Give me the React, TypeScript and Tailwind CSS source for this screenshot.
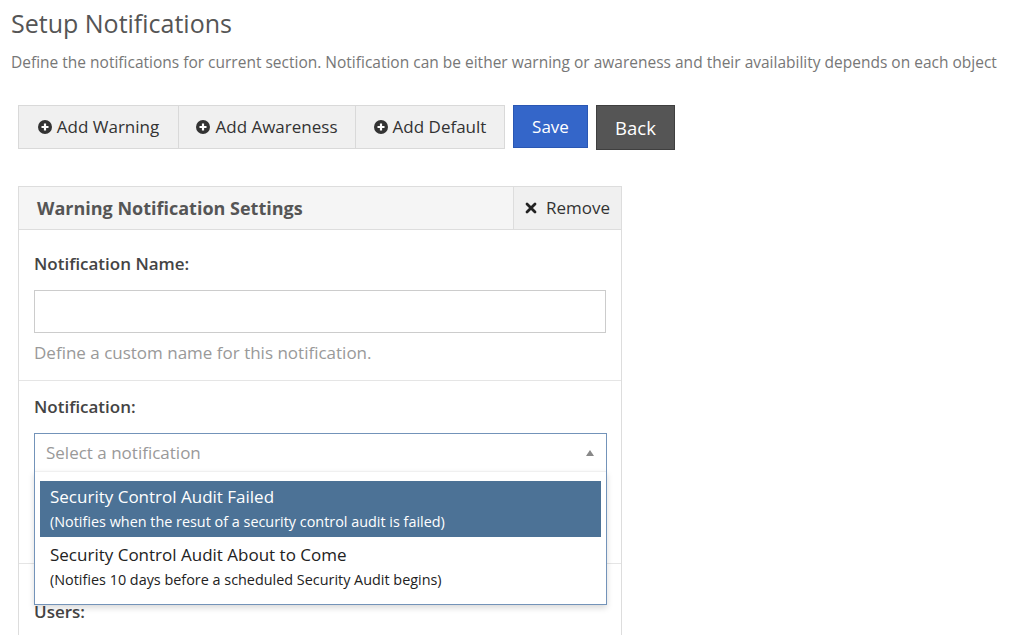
import React from 'react';

function PlusCircle() {
    return (
        <svg width="14" height="14" viewBox="0 0 14 14" className="shrink-0">
            <circle cx="7" cy="7" r="7" fill="#333" />
            <path d="M7 3.5v7M3.5 7h7" stroke="#fff" strokeWidth="2.2" />
        </svg>
    );
}

function TimesIcon() {
    return (
        <svg width="12" height="12" viewBox="0 0 12 12" className="shrink-0">
            <path d="M2 2l8 8M10 2l-8 8" stroke="#222" strokeWidth="2.8" strokeLinecap="round" />
        </svg>
    );
}

export default function App() {
    const addButtons = [
        { label: 'Add Warning', width: 'w-[159px]' },
        { label: 'Add Awareness', width: 'w-[177px]' },
        { label: 'Add Default', width: 'w-[149px]' },
    ];

    const options = [
        {
            title: 'Security Control Audit Failed',
            desc: '(Notifies when the resut of a security control audit is failed)',
            active: true,
        },
        {
            title: 'Security Control Audit About to Come',
            desc: '(Notifies 10 days before a scheduled Security Audit begins)',
            active: false,
        },
    ];

    return (
        <div className="w-full h-[635px] overflow-hidden bg-white font-['Open_Sans',sans-serif]">
            {/* Page header */}
            <h1 className="pl-[11px] pt-[8px] text-[25px] leading-[30px] text-[#555] font-normal">
                Setup Notifications
            </h1>
            <p className="pl-[11px] mt-[14px] text-[15.5px] leading-[20px] text-[#777] whitespace-nowrap">
                Define the notifications for current section. Notification can be either warning or awareness and their availability depends on each object
            </p>

            {/* Toolbar */}
            <div className="flex items-start ml-[18px] mt-[33px]">
                <div className="flex h-[44px] border border-[#d9d9d9] bg-[#f0f0f0]">
                    {addButtons.map((b, i) => (
                        <button
                            key={b.label}
                            className={`${b.width} flex items-center justify-center gap-[5px] text-[17px] text-[#333] ${i > 0 ? 'border-l border-[#d9d9d9]' : ''}`}
                        >
                            <PlusCircle />
                            <span>{b.label}</span>
                        </button>
                    ))}
                </div>
                <button className="ml-[8px] w-[75px] h-[43px] bg-[#3466c9] border border-[#2a57b3] text-white text-[17px]">
                    Save
                </button>
                <button className="ml-[8px] w-[79px] h-[45px] bg-[#555] border border-[#3f3f3f] text-white text-[18.5px]">
                    Back
                </button>
            </div>

            {/* Settings panel */}
            <div className="ml-[18px] mt-[36px] w-[604px] border border-[#ddd]">
                <div className="flex h-[43px] bg-[#f5f5f5] border-b border-[#ddd]">
                    <div className="flex-1 flex items-center pl-[18px] text-[18px] font-bold text-[#555]">
                        Warning Notification Settings
                    </div>
                    <div className="w-[108px] flex items-center justify-center gap-[9px] border-l border-[#ddd] bg-[#f0f0f0] text-[17px] text-[#333]">
                        <TimesIcon />
                        <span>Remove</span>
                    </div>
                </div>

                <div className="px-[15px] pt-[22px] pb-[15px] border-b border-[#e5e5e5]">
                    <div className="text-[17px] leading-[24px] font-semibold text-[#444]">Notification Name:</div>
                    <input
                        className="mt-[14px] block w-[572px] h-[43px] border border-[#ccc] outline-none px-[10px]"
                        type="text"
                    />
                    <div className="mt-[8px] text-[17px] leading-[24px] text-[#999]">
                        Define a custom name for this notification.
                    </div>
                </div>

                <div className="px-[15px] pt-[14px] pb-[20px] h-[183px] border-b border-[#e5e5e5]">
                    <div className="text-[17px] leading-[24px] font-semibold text-[#444]">Notification:</div>
                    <div className="relative mt-[14px] w-[573px] z-10">
                        <div className="flex items-center justify-between h-[38px] px-[11px] border border-b-0 border-[#7393b9] bg-white">
                            <span className="text-[17px] text-[#999]">Select a notification</span>
                            <svg width="10" height="8" viewBox="0 0 10 8">
                                <path d="M5 1l4 6H1z" fill="#888" />
                            </svg>
                        </div>
                        <div className="absolute left-0 right-0 top-full border border-t-0 border-[#7393b9] bg-white shadow-[0_3px_6px_rgba(0,0,0,0.15)]">
                            <div className="h-[1px] bg-[#f0f0f0]" />
                            <div className="px-[5px] pt-[9px] pb-[7px]">
                                {options.map((o) => (
                                    <div
                                        key={o.title}
                                        className={`px-[10px] pt-[5px] ${o.active ? 'pb-[6px] bg-[#4c7296] text-white' : 'pb-[8px] pt-[7px] bg-white text-[#222]'}`}
                                    >
                                        <div className="text-[17px] leading-[22px]">{o.title}</div>
                                        <div className="mt-[4px] text-[14.4px] leading-[19px]">{o.desc}</div>
                                    </div>
                                ))}
                            </div>
                        </div>
                    </div>
                </div>

                <div className="px-[15px] pt-[36px] pb-[20px]">
                    <div className="text-[17px] leading-[24px] font-semibold text-[#444]">Users:</div>
                </div>
            </div>
        </div>
    );
}
